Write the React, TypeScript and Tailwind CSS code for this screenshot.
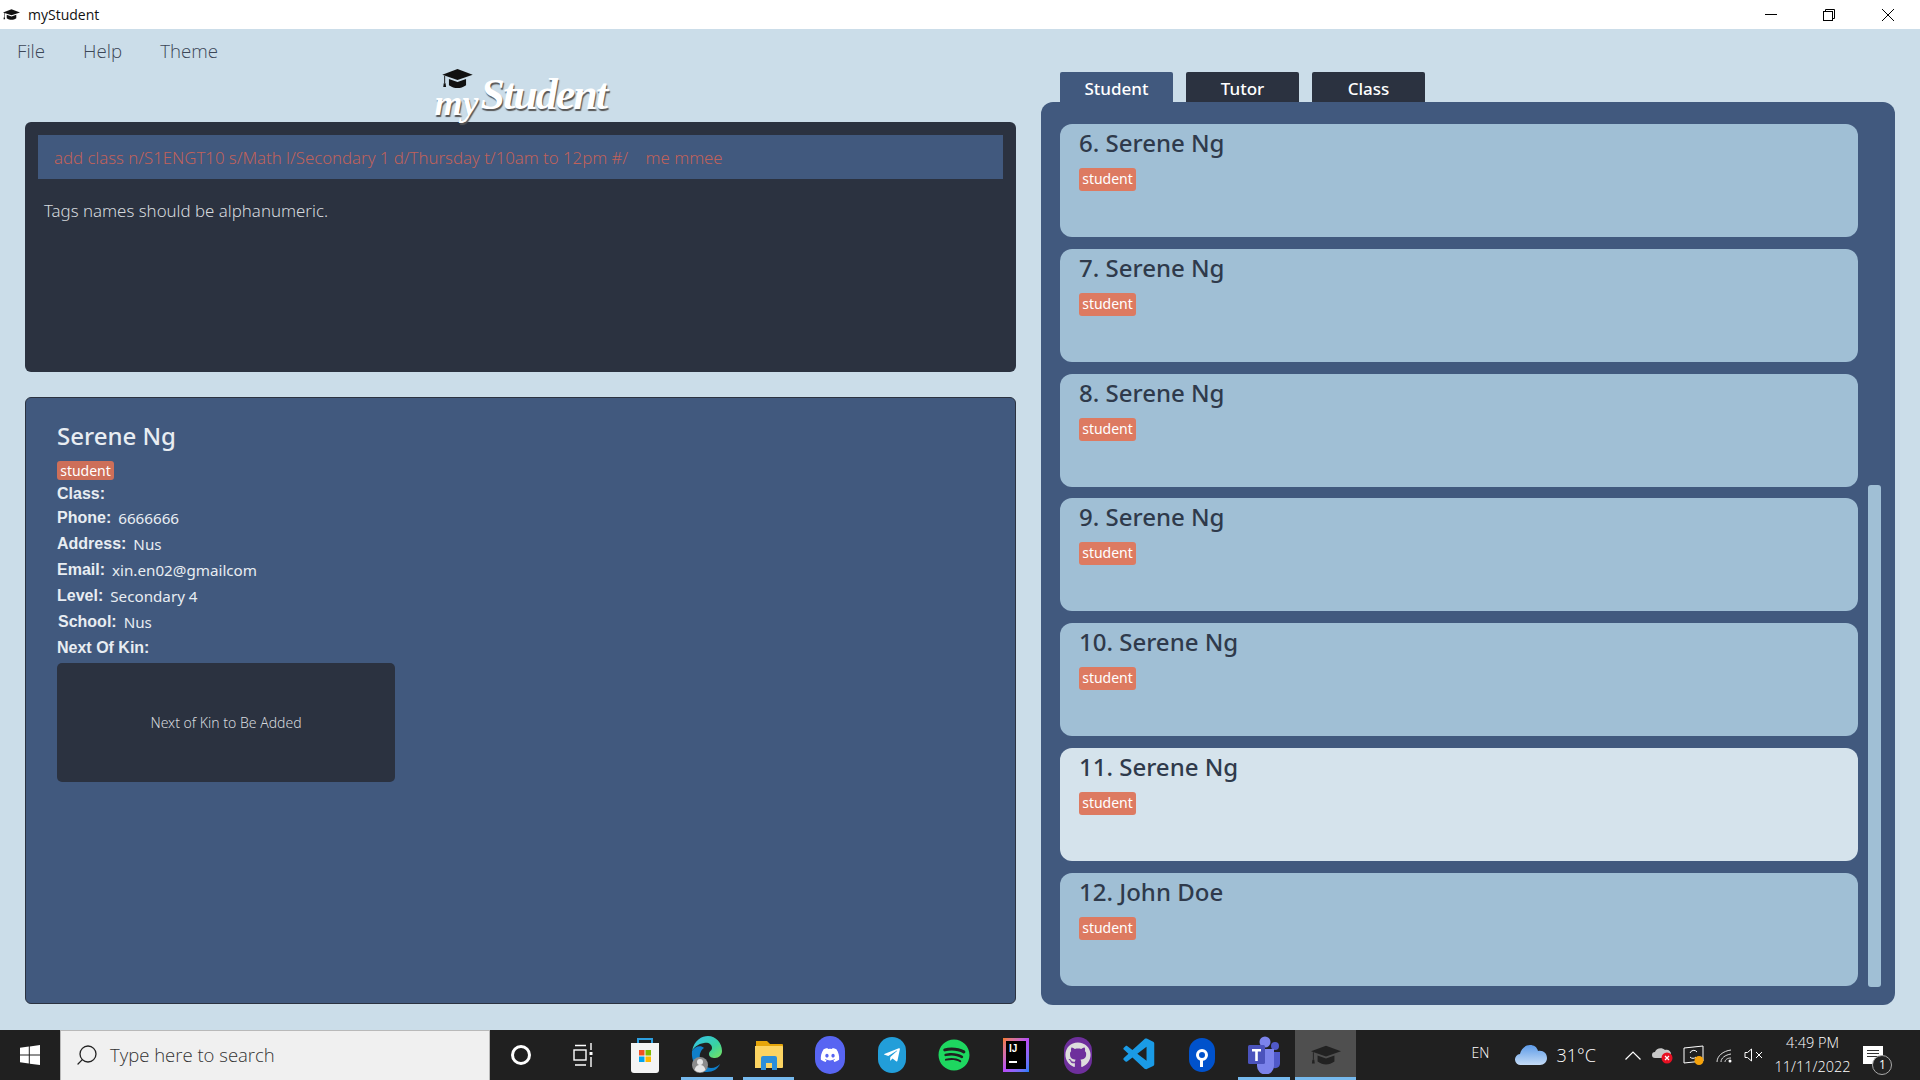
import { FC, ReactNode } from "react";
import { FaDiscord, FaGithub, FaSpotify, FaTelegramPlane } from "react-icons/fa";
import { VscVscode } from "react-icons/vsc";
import { Search } from "lucide-react";

const students = [
  { name: "6. Serene Ng" },
  { name: "7. Serene Ng" },
  { name: "8. Serene Ng" },
  { name: "9. Serene Ng" },
  { name: "10. Serene Ng" },
  { name: "11. Serene Ng", selected: true },
  { name: "12. John Doe" },
];

const details = [
  { label: "Phone:", value: "6666666" },
  { label: "Address:", value: "Nus" },
  { label: "Email:", value: "xin.en02@gmailcom" },
  { label: "Level:", value: "Secondary 4" },
  { label: "School:", value: "Nus", nudge: true },
];

const Hat: FC<{ className?: string; fill?: string }> = ({ className, fill = "#111" }) => (
  <svg viewBox="0 0 32 20" className={className} fill={fill}>
    <path d="M16 0 32 6 16 11.5 0 6z" />
    <path d="M7 10.5 16 13.6 25 10.5V17C22 19.2 19 20 16 20S10 19.2 7 17z" />
    <path d="M2 7h1v8h-1z" />
    <path d="M1.5 15h2l.5 4h-3z" />
  </svg>
);

const Slot: FC<{ active?: boolean; running?: boolean; children: ReactNode }> = ({ active, running, children }) => (
  <div className={`relative flex h-full w-[61.9px] items-center justify-center ${active ? "bg-[#4f4f4f]" : ""}`}>
    {children}
    {running && <div className={`absolute bottom-0 h-[3px] bg-[#76b9ed] ${active ? "inset-x-0" : "inset-x-[5px]"}`} />}
  </div>
);

const WindowsLogo = () => (
  <svg viewBox="0 0 20 20" className="h-[20px] w-[20px]" fill="#fff">
    <path d="M0 2.8 8.8 1.6V9.6H0z" />
    <path d="M9.8 1.4 20 0V9.6H9.8z" />
    <path d="M0 10.6H8.8V18.6L0 17.3z" />
    <path d="M9.8 10.6H20V20L9.8 18.7z" />
  </svg>
);

const TaskView = () => (
  <svg viewBox="0 0 20 24" className="h-[24px] w-[20px]" fill="none" stroke="#fff" strokeWidth="1.4">
    <path d="M2 2.5h11M2 22h11" />
    <rect x="1" y="7" width="12" height="10" />
    <path d="M18 0v7M18 14v10" />
    <rect x="16.5" y="9" width="3" height="3" fill="#fff" stroke="none" />
  </svg>
);

const StoreIcon = () => (
  <svg viewBox="0 0 30 38" className="h-[38px] w-[30px]">
    <path d="M8 8V3h14v5" fill="none" stroke="#2d9fe0" strokeWidth="2" />
    <path d="M1 7h28v27a3 3 0 0 1-3 3H4a3 3 0 0 1-3-3z" fill="#f4f4f4" />
    <rect x="9" y="14" width="5.5" height="5.5" fill="#f25022" />
    <rect x="15.5" y="14" width="5.5" height="5.5" fill="#7fba00" />
    <rect x="9" y="20.5" width="5.5" height="5.5" fill="#00a4ef" />
    <rect x="15.5" y="20.5" width="5.5" height="5.5" fill="#ffb900" />
  </svg>
);

const EdgeIcon = () => (
  <svg viewBox="0 0 32 40" className="h-[40px] w-[32px]">
    <defs>
      <linearGradient id="edge-a" x1="0" y1="0" x2="1" y2="1">
        <stop offset="0" stopColor="#35c1f1" />
        <stop offset="0.6" stopColor="#39d2a0" />
        <stop offset="1" stopColor="#7de35c" />
      </linearGradient>
    </defs>
    <path d="M1 16C3 5 11 1 17 1c8 0 14 7 14 15 0 4-3 7-7 7-3 0-6-1-6-4 0-3 3-3 3-6 0-4-4-6-8-5-6 1-10 4-12 8z" fill="url(#edge-a)" />
    <path d="M1 16c3-5 9-6 12-3-3 2-5 6-4 11 1 5 6 9 11 9 4 0 7-2 9-4-2 5-7 8-13 8C7 37 0 28 1 16z" fill="#0f7fc9" />
    <circle cx="9" cy="30" r="8" fill="#8c8c8c" />
    <circle cx="9" cy="27" r="3" fill="#e6e6e6" />
    <path d="M3.5 35c1-4 3-5 5.500-5s4.500 1 5.500 5a8 8 0 0 1-11 0z" fill="#e6e6e6" />
  </svg>
);

const FolderIcon = () => (
  <svg viewBox="0 0 28 30" className="h-[30px] w-[28px]">
    <path d="M1 1h11l3 3H1z" fill="#e5a50a" />
    <path d="M1 4h26a1 1 0 0 1 1 1v3H1z" fill="#e5a50a" />
    <path d="M0 6h27a1 1 0 0 1 1 1v20a1 1 0 0 1-1 1H0z" fill="#fcd462" />
    <path d="M6 30V18a2 2 0 0 1 2-2h12a2 2 0 0 1 2 2v12h-5v-7h-6v7z" fill="#2d8fd9" />
  </svg>
);

const IdeaIcon = () => (
  <div className="flex h-[34px] w-[26px] items-center justify-center bg-gradient-to-br from-[#f97a12] via-[#b74af7] to-[#087cfa] p-[3px]">
    <div className="flex h-full w-full flex-col bg-black px-[3px] pt-[2px] font-['Liberation_Sans',sans-serif] text-[10px] leading-[11px] font-bold text-white">
      <span>IJ</span>
      <div className="mt-[7px] h-[2px] w-[8px] bg-white" />
    </div>
  </div>
);

const SourcetreeIcon = () => (
  <div className="flex h-[34px] w-[26px] items-center justify-center rounded-full bg-[#0052cc]">
    <div className="relative h-[12px] w-[12px] rounded-full border-[3px] border-white">
      <div className="absolute top-[7px] left-[1.5px] h-[8px] w-[3px] bg-white" />
    </div>
  </div>
);

const TeamsIcon = () => (
  <svg viewBox="0 0 32 38" className="h-[38px] w-[32px]">
    <circle cx="17" cy="6" r="5.500" fill="#7b83eb" />
    <circle cx="27" cy="10" r="4" fill="#5059c9" />
    <path d="M23 16h9v12a5 5 0 0 1-9 2z" fill="#5059c9" />
    <path d="M9 13h17v17a8 8 0 0 1-17 0z" fill="#7b83eb" />
    <rect x="0" y="9" width="17" height="19" rx="1.500" fill="#4b53bc" />
    <path d="M4 13h9v2.400h-3.200V25H7.200v-9.600H4z" fill="#fff" />
  </svg>
);

const CloudIcon = () => (
  <svg viewBox="0 0 32 22" className="h-[22px] w-[32px]">
    <defs>
      <linearGradient id="cloud-a" x1="0" y1="0" x2="0" y2="1">
        <stop offset="0" stopColor="#5d9be8" />
        <stop offset="1" stopColor="#c5dcf6" />
      </linearGradient>
    </defs>
    <path d="M6 21a5.500 5.500 0 0 1-1-11c1-5 5-9 10-9 4 0 7 2 8 6 5-1 9 2 9 7 0 4-3 7-7 7z" fill="url(#cloud-a)" />
  </svg>
);

const Tray = () => (
  <div className="flex h-full flex-1 items-center font-['Open_Sans',sans-serif] text-white">
    <span className="mb-[4px] ml-[115px] w-[44px] text-[14px] leading-none font-light">EN</span>
    <CloudIcon />
    <span className="ml-[9px] w-[69px] text-[18px] leading-none font-light">31°C</span>
    <svg viewBox="0 0 16 9" className="h-[9px] w-[16px]" fill="none" stroke="#fff" strokeWidth="1.200">
      <path d="M0.500 8.500 8 1l7.500 7.500" />
    </svg>
    <svg viewBox="0 0 22 18" className="ml-[11px] h-[18px] w-[22px]">
      <path d="M3 12a3 3 0 0 1 0-6c1-4 7-5 10-2 3-1 6 1 6 4v4z" fill="#c8c8c8" />
      <circle cx="15" cy="12" r="5.500" fill="#e81123" />
      <path d="M13 10l4 4M17 10l-4 4" stroke="#fff" strokeWidth="1.200" />
    </svg>
    <svg viewBox="0 0 22 20" className="ml-[9px] h-[20px] w-[22px]">
      <path d="M1 3 20 1v15L1 18z" fill="none" stroke="#fff" strokeWidth="1" />
      <path d="M7 8a4 4 0 0 1 7-1M13 12a4 4 0 0 1-6 0" fill="none" stroke="#fff" strokeWidth="1" />
      <circle cx="16" cy="15.500" r="4.500" fill="#f7a30a" />
    </svg>
    <svg viewBox="0 0 16 16" className="ml-[11px] h-[16px] w-[16px]" fill="none" stroke="#ddd" strokeWidth="1">
      <path d="M1 15C1 9 7 4 15 3M5 15C5 11 9 8 15 7M9 15C9 13 11 11 15 11" />
      <circle cx="14" cy="14" r="1.500" fill="#fff" stroke="none" />
    </svg>
    <svg viewBox="0 0 20 14" className="ml-[12px] h-[14px] w-[20px]" fill="none" stroke="#fff" strokeWidth="1">
      <path d="M1 4.500h2.500L7.500 1v12L3.500 9.500H1z" />
      <path d="M12 4l6 6M18 4l-6 6" />
    </svg>
    <div className="ml-[4px] flex w-[88px] flex-col items-center text-[14.5px] leading-[24px] font-light">
      <span>4:49 PM</span>
      <span>11/11/2022</span>
    </div>
    <div className="relative ml-[7px] h-[18px] w-[20px] bg-white">
      <div className="mx-[4px] mt-[4px] h-[1px] bg-[#333]" />
      <div className="mx-[4px] mt-[2px] h-[1px] bg-[#333]" />
      <div className="mx-[4px] mt-[2px] h-[1px] bg-[#333]" />
      <div className="absolute top-[9px] left-[9px] flex h-[20px] w-[20px] items-center justify-center rounded-full border border-[#aaa] bg-[#222] text-[12px] leading-none">
        1
      </div>
    </div>
  </div>
);

const Taskbar = () => (
  <div className="flex h-[50px] w-full shrink-0 items-center bg-[#202020]">
    <div className="flex h-full w-[60px] items-center justify-center">
      <WindowsLogo />
    </div>
    <div className="flex h-full w-[430px] items-center gap-[11px] border-x border-t border-[#b9b9b9] bg-[#f0f0f0] pb-[2px] pl-[14px] font-['Open_Sans',sans-serif] text-[18.5px] text-[#333]">
      <Search size={24} strokeWidth={1.3} className="-scale-x-100 text-[#222]" />
      <span className="font-light">Type here to search</span>
    </div>
    <Slot>
      <div className="h-[20px] w-[20px] rounded-full border-[3px] border-white" />
    </Slot>
    <Slot>
      <TaskView />
    </Slot>
    <Slot>
      <StoreIcon />
    </Slot>
    <Slot running>
      <EdgeIcon />
    </Slot>
    <Slot running>
      <FolderIcon />
    </Slot>
    <Slot>
      <div className="flex h-[38px] w-[30px] items-center justify-center rounded-full bg-[#5865f2]">
        <FaDiscord size={20} color="#fff" />
      </div>
    </Slot>
    <Slot>
      <div className="flex h-[36px] w-[28px] items-center justify-center rounded-full bg-[#229ed9]">
        <FaTelegramPlane size={18} color="#fff" />
      </div>
    </Slot>
    <Slot>
      <FaSpotify size={32} color="#1ed760" />
    </Slot>
    <Slot>
      <IdeaIcon />
    </Slot>
    <Slot>
      <div className="flex h-[37px] w-[28px] items-center justify-center rounded-full bg-[#6e2f9c]">
        <FaGithub size={26} color="#ddd" />
      </div>
    </Slot>
    <Slot>
      <VscVscode size={38} color="#1a9be6" />
    </Slot>
    <Slot>
      <SourcetreeIcon />
    </Slot>
    <Slot running>
      <TeamsIcon />
    </Slot>
    <Slot active running>
      <Hat className="h-[20px] w-[30px]" fill="#222" />
    </Slot>
    <Tray />
  </div>
);

const TitleBar = () => (
  <div className="flex h-[29px] w-full shrink-0 items-center bg-white font-['Open_Sans',sans-serif]">
    <Hat className="ml-[3px] h-[11px] w-[17px]" />
    <span className="ml-[8px] text-[14px] text-[#111]">myStudent</span>
    <div className="ml-auto flex items-center pr-[26px]">
      <div className="h-px w-[12px] bg-black" />
      <svg viewBox="0 0 12 12" className="ml-[46px] h-[12px] w-[12px]" fill="none" stroke="#000" strokeWidth="1">
        <rect x="0.500" y="2.500" width="9" height="9" />
        <path d="M2.500 2.500V0.500h9v9h-2" />
      </svg>
      <svg viewBox="0 0 12 12" className="ml-[47px] h-[12px] w-[12px]" fill="none" stroke="#000" strokeWidth="1">
        <path d="M0 0l12 12M12 0 0 12" />
      </svg>
    </div>
  </div>
);

const Logo = () => (
  <div className="relative mx-auto h-[50px] w-[172px] font-['Liberation_Serif',serif] text-white italic [text-shadow:1px_2px_1px_#555]">
    <Hat className="absolute top-[-3px] left-[6px] h-[19px] w-[33px]" />
    <span className="absolute top-[13px] left-0 text-[36px] leading-[36px] font-bold">my</span>
    <span className="absolute top-[1px] left-[46px] text-[44px] leading-[44px] font-bold tracking-[-2px]">Student</span>
  </div>
);

const CommandPanel = () => (
  <div className="h-[250px] rounded-[6px] bg-[#2b3240] px-[13px] pt-[13px]">
    <div className="flex h-[44px] items-center bg-[#41597e] pt-[2px] pl-[16px] text-[16.75px] font-light text-[#c0615a]">
      <span className="whitespace-pre">add class n/S1ENGT10 s/Math l/Secondary 1 d/Thursday t/10am to 12pm #/    me mmee</span>
    </div>
    <p className="mt-[20px] pl-[6px] text-[16.85px] leading-[24px] font-light text-[#d5d9de]">Tags names should be alphanumeric.</p>
  </div>
);

const DetailPanel = () => (
  <div className="mt-[25px] h-[607px] rounded-[6px] border border-[#2b3240] bg-[#41597e] pt-[22px] pl-[31px] text-[#e8edf2]">
    <h1 className="text-[24px] leading-[32px] font-medium">Serene Ng</h1>
    <div className="mt-[9px] flex h-[19px] w-[57px] items-center justify-center rounded-[3px] bg-[#cd6f59] text-[14px] leading-none text-white">
      student
    </div>
    <div className="h-[25px] font-['Liberation_Sans',sans-serif] text-[16px] leading-[28px] font-bold">Class:</div>
    {details.map((row) => (
      <div key={row.label} className={`flex h-[26px] items-center gap-[7px] ${row.nudge ? "pl-px" : ""}`}>
        <span className="font-['Liberation_Sans',sans-serif] text-[16px] font-bold">{row.label}</span>
        <span className="text-[15.2px]">{row.value}</span>
      </div>
    ))}
    <div className="h-[28px] font-['Liberation_Sans',sans-serif] text-[16px] leading-[26px] font-bold">Next Of Kin:</div>
    <div className="flex h-[119px] w-[338px] items-center justify-center rounded-[5px] bg-[#2b3240] text-[14px] font-light text-[#d5d9de]">
      Next of Kin to Be Added
    </div>
  </div>
);

const TabBar = () => (
  <div className="flex h-[30px] gap-[13px] pl-[19px]">
    {["Student", "Tutor", "Class"].map((tab, i) => (
      <div
        key={tab}
        className={`flex w-[113px] items-center justify-center rounded-t-[2px] pt-[3px] text-[17px] font-medium text-white ${i === 0 ? "bg-[#41597e]" : "bg-[#2b3240]"}`}
      >
        {tab}
      </div>
    ))}
  </div>
);

const StudentCard: FC<{ name: string; selected?: boolean }> = ({ name, selected }) => (
  <div className={`h-[113px] rounded-[12px] pt-[3px] pl-[19px] text-[#2f3a4b] ${selected ? "bg-[#d5e3ec]" : "bg-[#a0bfd5]"}`}>
    <h2 className="text-[24px] leading-[32px] font-medium">{name}</h2>
    <div className="mt-[9px] flex h-[23px] w-[57px] items-center justify-center rounded-[3px] bg-[#dd7a61] pb-px text-[14px] leading-none text-white">
      student
    </div>
  </div>
);

const StudentList = () => (
  <div className="relative h-[903px] rounded-[12px] bg-[#41597e] pt-[22px] pl-[19px]">
    <div className="flex w-[798px] flex-col gap-[11.830px]">
      {students.map((s) => (
        <StudentCard key={s.name} name={s.name} selected={s.selected} />
      ))}
    </div>
    <div className="absolute top-[383px] right-[14px] h-[502px] w-[13px] rounded-[3px] bg-[#a0bfd5]" />
  </div>
);

export default function App() {
  return (
    <div className="flex h-screen w-[1920px] flex-col overflow-hidden bg-[#cbdde9] font-['Noto_Sans',sans-serif]">
      <TitleBar />
      <div className="flex min-h-0 flex-1">
        <div className="flex w-[1041px] flex-col">
          <div className="flex h-[43px] items-center gap-[38px] pt-[2px] pl-[17px] font-['Open_Sans',sans-serif] text-[18.7px] font-light text-[#3b4657]">
            <span>File</span>
            <span>Help</span>
            <span>Theme</span>
          </div>
          <div className="ml-[25px] w-[991px]">
            <Logo />
            <CommandPanel />
            <DetailPanel />
          </div>
        </div>
        <div className="w-[854px] pt-[43px]">
          <TabBar />
          <StudentList />
        </div>
      </div>
      <Taskbar />
    </div>
  );
}
